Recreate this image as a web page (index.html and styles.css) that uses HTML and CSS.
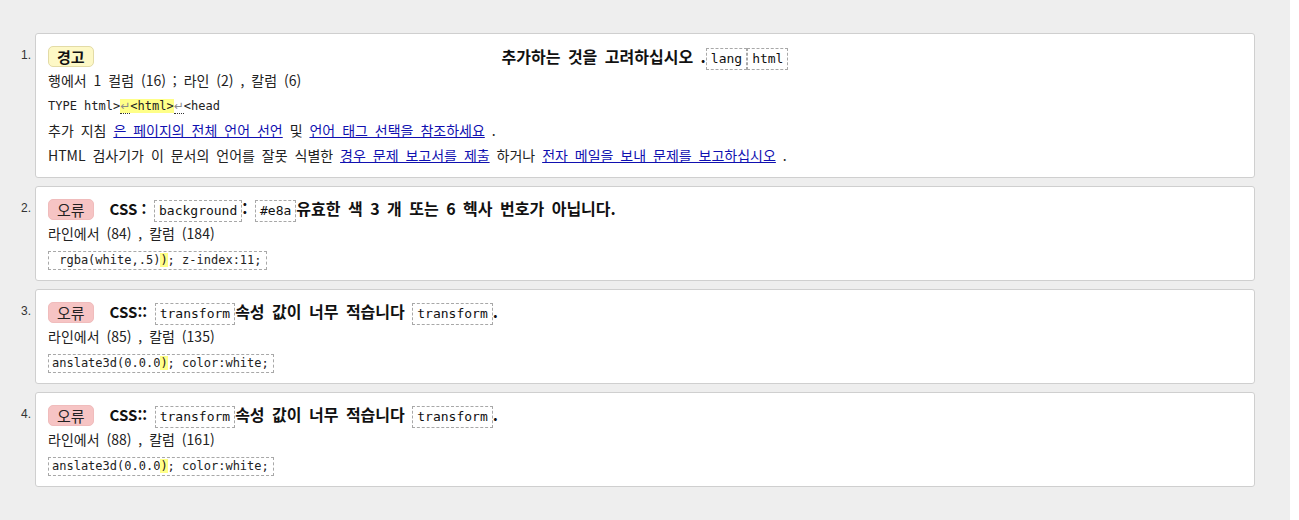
FILE: index.html
```html
<!DOCTYPE html>
<html lang="ko">
<head>
<meta charset="utf-8">
<title>검사 결과</title>
<link rel="stylesheet" href="styles.css">
</head>
<body>
<div class="page">
  <ol class="results">
    <li class="item">
      <span class="num">1.</span>
      <div class="card">
        <div class="head head-center">
          <span class="badge warn">경고</span>
          <span class="title">추가하는 것을 고려하십시오 .<code class="tok">lang</code><code class="tok">html</code></span>
        </div>
        <div class="line">행에서 1 컬럼 (16) ; 라인 (2) , 칼럼 (6)</div>
        <div class="line mono">TYPE html&gt;<mark class="hl"><span class="nl">↵</span>&lt;html&gt;</mark><span class="nl">↵</span>&lt;head</div>
        <div class="line">추가 지침 <a href="#">은 페이지의 전체 언어 선언</a> 및 <a href="#">언어 태그 선택을 참조하세요</a> .</div>
        <div class="line">HTML 검사기가 이 문서의 언어를 잘못 식별한 <a href="#">경우 문제 보고서를 제출</a> 하거나 <a href="#">전자 메일을 보내 문제를 보고하십시오</a> .</div>
      </div>
    </li>
    <li class="item">
      <span class="num">2.</span>
      <div class="card">
        <div class="head">
          <span class="badge err">오류</span>
          <span class="title"><span class="css">CSS :</span> <code class="tok">background</code>: <code class="tok">#e8a</code>유효한 색 3 개 또는 6 헥사 번호가 아닙니다.</span>
        </div>
        <div class="line">라인에서 (84) , 칼럼 (184)</div>
        <div class="line"><code class="snippet"> rgba(white,.5)<mark class="hl">)</mark>; z-index:11;</code></div>
      </div>
    </li>
    <li class="item">
      <span class="num">3.</span>
      <div class="card">
        <div class="head">
          <span class="badge err">오류</span>
          <span class="title"><span class="css">CSS::</span> <code class="tok">transform</code>속성 값이 너무 적습니다 <code class="tok">transform</code>.</span>
        </div>
        <div class="line">라인에서 (85) , 칼럼 (135)</div>
        <div class="line"><code class="snippet">anslate3d(0.0.0<mark class="hl">)</mark>; color:white;</code></div>
      </div>
    </li>
    <li class="item">
      <span class="num">4.</span>
      <div class="card">
        <div class="head">
          <span class="badge err">오류</span>
          <span class="title"><span class="css">CSS::</span> <code class="tok">transform</code>속성 값이 너무 적습니다 <code class="tok">transform</code>.</span>
        </div>
        <div class="line">라인에서 (88) , 칼럼 (161)</div>
        <div class="line"><code class="snippet">anslate3d(0.0.0<mark class="hl">)</mark>; color:white;</code></div>
      </div>
    </li>
  </ol>
</div>
</body>
</html>
```

FILE: styles.css
```css
html, body {
  margin: 0;
  padding: 0;
  background: #ffffff;
}

body {
  font-family: "Noto Sans CJK KR", "Noto Sans", sans-serif;
  font-size: 14px;
  color: #222;
}

.page {
  width: 1290px;
  height: 520px;
  background: #eeeeee;
  padding-top: 33px;
  box-sizing: border-box;
}

.results {
  list-style: none;
  margin: 0;
  padding: 0 35px 0 0;
  display: flex;
  flex-direction: column;
  gap: 8px;
}

.item {
  display: flex;
  align-items: flex-start;
}

.num {
  width: 35px;
  flex: none;
  box-sizing: border-box;
  padding: 10px 4px 0 0;
  text-align: right;
  line-height: 24px;
  font-family: "Liberation Sans", sans-serif;
  font-size: 12px;
  color: #333;
}

.card {
  flex: 1;
  background: #fff;
  border: 1px solid #cfcfcf;
  border-radius: 3px;
  padding: 10px 12px 9px;
}

.head {
  display: flex;
  align-items: center;
  gap: 16px;
  height: 24px;
}

.head-center {
  display: grid;
  grid-template-columns: 1fr auto 1fr;
}

.head-center .badge {
  justify-self: start;
}

.title {
  font-size: 16px;
  font-weight: bold;
  word-spacing: 3px;
  color: #111;
  white-space: nowrap;
}

.css {
  font-size: 15px;
  word-spacing: 0;
}

.badge {
  display: inline-block;
  box-sizing: border-box;
  height: 21px;
  line-height: 19px;
  padding: 0 8px;
  font-size: 15px;
  font-weight: bold;
  border-radius: 5px;
  color: #111;
}

.warn {
  background: #fdf8c6;
  border: 1px solid #e3dba6;
}

.err {
  background: #f6c4c4;
  border: 1px solid #f0bcbc;
  font-weight: normal;
  color: #222;
}

.tok {
  display: inline-block;
  font-family: "DejaVu Sans Mono", monospace;
  font-size: 13px;
  font-weight: normal;
  word-spacing: 0;
  line-height: 20px;
  padding: 0 4px;
  border: 1px dashed #a8a8a8;
  color: #111;
  vertical-align: middle;
}

.line {
  height: 25px;
  line-height: 25px;
  word-spacing: 3px;
  white-space: nowrap;
}

.mono {
  font-family: "DejaVu Sans Mono", monospace;
  font-size: 12px;
  line-height: 27px;
  word-spacing: 0;
}

.snippet {
  display: inline-block;
  font-family: "DejaVu Sans Mono", monospace;
  font-size: 12px;
  line-height: 17px;
  word-spacing: 0;
  padding: 0 4px 0 3px;
  border: 1px dashed #a8a8a8;
  white-space: pre;
  vertical-align: middle;
}

.hl {
  background: #ffff88;
  color: inherit;
}

.nl {
  font-family: "DejaVu Sans", sans-serif;
  font-size: 12px;
  color: #8a8a8a;
  border-bottom: 1px dotted #333;
}

a {
  color: #1010b0;
  text-decoration: underline;
}
```
